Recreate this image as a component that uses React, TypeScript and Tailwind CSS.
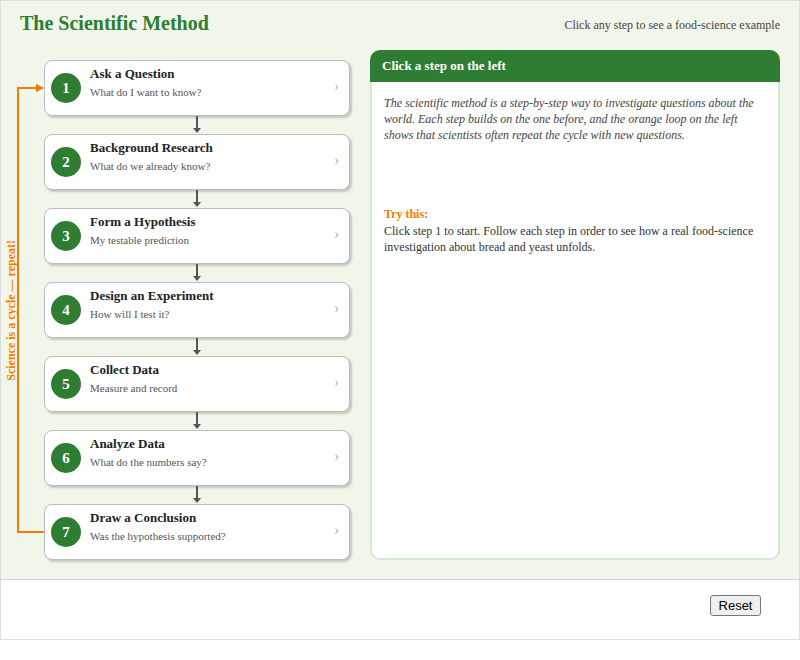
import React, { useState } from 'react';

type Step = {
  title: string;
  subtitle: string;
};

const steps: Step[] = [
  { title: 'Ask a Question', subtitle: 'What do I want to know?' },
  { title: 'Background Research', subtitle: 'What do we already know?' },
  { title: 'Form a Hypothesis', subtitle: 'My testable prediction' },
  { title: 'Design an Experiment', subtitle: 'How will I test it?' },
  { title: 'Collect Data', subtitle: 'Measure and record' },
  { title: 'Analyze Data', subtitle: 'What do the numbers say?' },
  { title: 'Draw a Conclusion', subtitle: 'Was the hypothesis supported?' },
];

const DownArrow = () => (
  <div className="flex h-[18px] w-[306px] justify-center">
    <svg width="10" height="18" viewBox="0 0 10 18">
      <line x1="5" y1="0" x2="5" y2="13" stroke="#555" strokeWidth="2" />
      <polygon points="1,12 9,12 5,17" fill="#555" />
    </svg>
  </div>
);

const StepCard = ({
  index,
  step,
  active,
  onClick,
}: {
  index: number;
  step: Step;
  active: boolean;
  onClick: () => void;
}) => (
  <button
    type="button"
    onClick={onClick}
    className={`flex h-[56px] w-[306px] items-start rounded-[8px] border bg-white pl-[6px] pr-[10px] text-left shadow-[2px_2px_2px_rgba(60,70,50,0.25)] ${
      active ? 'border-[#2e7d32]' : 'border-[#bdbdbd]'
    }`}
  >
    <span className="mt-[12px] flex h-[30px] w-[30px] shrink-0 items-center justify-center rounded-full bg-[#2e7d32] text-[15px] font-bold text-white">
      {index + 1}
    </span>
    <span className="ml-[9px] flex flex-col pt-[5px]">
      <span className="text-[13px] font-bold leading-[16px] text-[#222]">{step.title}</span>
      <span className="mt-[3px] text-[11px] leading-[14px] text-[#555]">{step.subtitle}</span>
    </span>
    <span className="ml-auto mt-[18px] text-[14px] leading-[16px] text-[#aaa]">›</span>
  </button>
);

const CycleLoop = () => (
  <>
    <svg className="absolute left-0 top-0" width="50" height="500" viewBox="0 0 50 500">
      <polyline
        points="42,38 17,38 17,482 43,482"
        fill="none"
        stroke="#f57c00"
        strokeWidth="2"
      />
      <polygon points="35,34 43,38 35,42" fill="#f57c00" />
    </svg>
    <div className="absolute left-0 top-[38px] flex h-[444px] w-[20px] items-center justify-center">
      <span className="rotate-180 whitespace-nowrap text-[12px] font-bold text-[#f57c00] [writing-mode:vertical-rl]">
        Science is a cycle — repeat!
      </span>
    </div>
  </>
);

export default function App() {
  const [active, setActive] = useState<number | null>(null);

  return (
    <div className="h-[640px] w-[800px] border border-[#dddddd] font-['Liberation_Serif','Times_New_Roman',serif]">
      <div className="h-[579px] border-b border-[#d4d4d4] bg-[#f1f6ea]">
        <div className="flex h-[49px] items-start justify-between pl-[19px] pr-[19px]">
          <h1 className="pt-[10px] text-[20px] font-bold leading-[24px] text-[#2e7d32]">
            The Scientific Method
          </h1>
          <p className="pt-[16px] text-[12px] leading-[16px] text-[#444]">
            Click any step to see a food-science example
          </p>
        </div>

        <div className="flex">
          <div className="relative w-[350px] pl-[43px] pt-[10px]">
            <CycleLoop />
            <div className="flex flex-col">
              {steps.map((step, i) => (
                <React.Fragment key={step.title}>
                  {i > 0 && <DownArrow />}
                  <StepCard
                    index={i}
                    step={step}
                    active={active === i}
                    onClick={() => setActive(i)}
                  />
                </React.Fragment>
              ))}
            </div>
          </div>

          <div className="ml-[19px] flex h-[510px] w-[410px] flex-col">
            <div className="h-[32px] rounded-t-[10px] bg-[#2e7d32] pl-[12px] pt-[8px] text-[13px] font-bold leading-[16px] text-white">
              {active === null ? 'Click a step on the left' : steps[active].title}
            </div>
            <div className="flex-1 rounded-b-[10px] border-2 border-t-0 border-[#d3ead0] bg-white px-[12px] pt-[13px]">
              <p className="text-[12px] italic leading-[16px] text-[#444]">
                The scientific method is a step-by-step way to investigate questions about the
                world. Each step builds on the one before, and the orange loop on the left shows
                that scientists often repeat the cycle with new questions.
              </p>
              <p className="mt-[62px] text-[12px] font-bold leading-[18px] text-[#f57c00]">
                Try this:
              </p>
              <p className="text-[12px] leading-[16px] text-[#333]">
                Click step 1 to start. Follow each step in order to see how a real food-science
                investigation about bread and yeast unfolds.
              </p>
            </div>
          </div>
        </div>
      </div>

      <div className="flex h-[59px] items-start justify-end pr-[38px] pt-[15px]">
        <button
          type="button"
          onClick={() => setActive(null)}
          className="h-[21px] w-[51px] rounded-[3px] border border-[#767676] bg-[#efefef] font-['Liberation_Sans',Arial,sans-serif] text-[13px] leading-[19px] text-black"
        >
          Reset
        </button>
      </div>
    </div>
  );
}
